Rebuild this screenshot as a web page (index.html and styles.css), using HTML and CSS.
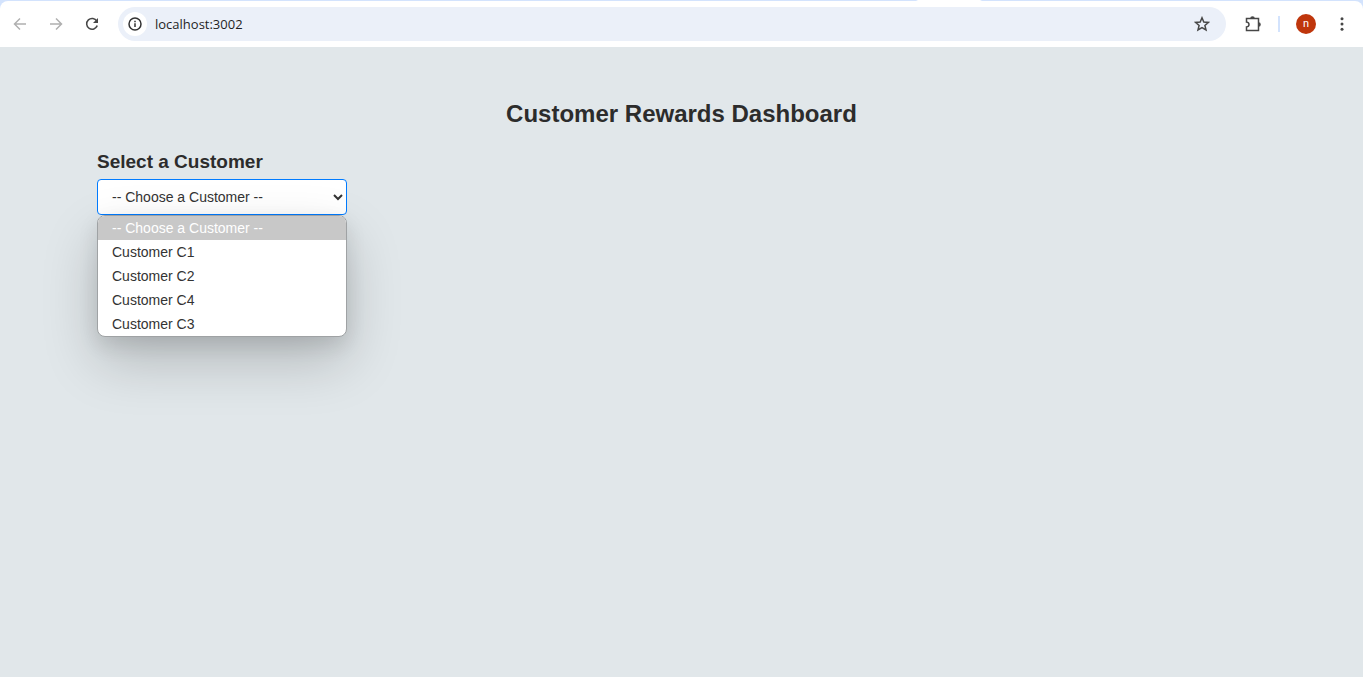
FILE: index.html
```
<!DOCTYPE html>
<html lang="en">
<head>
<meta charset="utf-8">
<title>Customer Rewards Dashboard</title>
<link rel="stylesheet" href="styles.css">
</head>
<body>
<header class="browser">
  <div class="toolbar">
    <nav class="nav" aria-label="Browser navigation">
      <button class="icon-btn dim" aria-label="Back"><svg viewBox="0 0 16 16"><path d="M14 8H2.5M8 2.5 2.5 8 8 13.5"/></svg></button>
      <button class="icon-btn dim" aria-label="Forward"><svg viewBox="0 0 16 16"><path d="M2 8h11.5M8 2.5 13.5 8 8 13.5"/></svg></button>
      <button class="icon-btn" aria-label="Reload"><svg viewBox="0 0 16 16"><path d="M12.8 5.2A5.4 5.4 0 1 0 13.2 9.6"/><path class="solid" d="M14 2v5H9z"/></svg></button>
    </nav>
    <div class="address">
      <button class="info" aria-label="Site information"><svg viewBox="0 0 16 16"><circle cx="8" cy="8" r="6"/><path d="M8 7.2V11M8 4.8v1.4"/></svg></button>
      <input class="url" type="text" aria-label="Address" value="localhost:3002">
      <button class="icon-btn" aria-label="Bookmark"><svg viewBox="0 0 16 16"><path d="M8 1.8 9.8 6l4.6.4-3.5 3 1.1 4.5L8 11.5l-4 2.4 1.1-4.5-3.5-3L6.2 6z"/></svg></button>
    </div>
    <div class="actions">
      <button class="icon-btn" aria-label="Extensions"><svg class="puzzle" viewBox="0 0 18 18"><path d="M2.500 3.500H14.500V15.500H2.500V12Q5 11.600 5 9.500T2.500 7Z"/><path class="solid" d="M6.200 3.500a2.300 2.300 0 0 1 4.600 0zM14.500 7.200a2.300 2.300 0 0 1 0 4.600z"/></svg></button>
      <span class="divider"></span>
      <button class="avatar" aria-label="Profile">n</button>
      <button class="icon-btn" aria-label="Menu"><svg viewBox="0 0 16 16"><g class="solid"><circle cx="8" cy="2.700" r="1.500"/><circle cx="8" cy="8" r="1.500"/><circle cx="8" cy="13.300" r="1.500"/></g></svg></button>
    </div>
  </div>
</header>
<main class="dashboard">
  <h1 class="title">Customer Rewards Dashboard</h1>
  <label class="label" for="customer">Select a Customer</label>
  <div class="picker">
    <select class="select" id="customer">
      <option>-- Choose a Customer --</option>
      <option>Customer C1</option>
      <option>Customer C2</option>
      <option>Customer C4</option>
      <option>Customer C3</option>
    </select>
    <ul class="menu" role="listbox" aria-label="Customers">
      <li class="option selected" role="option" aria-selected="true">-- Choose a Customer --</li>
      <li class="option" role="option">Customer C1</li>
      <li class="option" role="option">Customer C2</li>
      <li class="option" role="option">Customer C4</li>
      <li class="option" role="option">Customer C3</li>
    </ul>
  </div>
</main>
</body>
</html>
```
FILE: styles.css
```
* { box-sizing: border-box; }

body {
  margin: 0;
  min-height: 100vh;
  background: #e1e7ea;
  color: #2c2c2c;
  font-family: Arial, "Liberation Sans", sans-serif;
}

button {
  border: 0;
  padding: 0;
  background: none;
  font: inherit;
}

.browser {
  padding-top: 1px;
  background: linear-gradient(to right, #d3e3fd 916px, #fff 918px, #fff 980px, #d3e3fd 982px);
}

.toolbar {
  display: flex;
  align-items: center;
  height: 46px;
  padding: 0 12px 0 11px;
  background: #fff;
  border-radius: 8px 8px 0 0;
}

.nav {
  display: flex;
  gap: 18px;
}

.icon-btn {
  display: grid;
  place-items: center;
  width: 18px;
  height: 18px;
  color: #474747;
}

.dim { color: #b0b0b0; }

svg {
  width: 16px;
  height: 16px;
  fill: none;
  stroke: currentColor;
  stroke-width: 1.5;
}

.puzzle {
  width: 18px;
  height: 18px;
}

.solid {
  fill: currentColor;
  stroke: none;
}

.address {
  display: flex;
  flex: 1;
  align-items: center;
  height: 34px;
  margin-left: 17px;
  padding: 0 15px 0 5px;
  border-radius: 17px;
  background: #ebf0f9;
}

.info {
  display: grid;
  place-items: center;
  width: 24px;
  height: 24px;
  border-radius: 50%;
  background: #fff;
  color: #333;
}

.url {
  flex: 1;
  min-width: 0;
  padding: 0 8px;
  border: 0;
  outline: 0;
  background: none;
  color: #1f1f1f;
  font: 13px "Segoe UI", "Open Sans", sans-serif;
}

.actions {
  display: flex;
  align-items: center;
  margin-left: 18px;
}

.divider {
  width: 2px;
  height: 16px;
  margin: 0 16px;
  background: #d3e3fd;
}

.avatar {
  width: 20px;
  height: 20px;
  margin-right: 17px;
  border-radius: 50%;
  background: #bf360c;
  color: #fff;
  font: 11px/20px Roboto, sans-serif;
}

.dashboard { padding: 53px 97px; }

.title {
  margin: 0 0 20px;
  font-size: 24px;
  line-height: 28px;
  text-align: center;
}

.label {
  display: block;
  margin-bottom: 3px;
  font-size: 19px;
  font-weight: bold;
  line-height: 28px;
}

.picker {
  position: relative;
  width: 250px;
}

.select {
  display: block;
  width: 100%;
  height: 36px;
  padding: 0 0 0 10px;
  border: 1px solid #007bff;
  border-radius: 4px;
  outline: 0;
  background: #fff;
  color: #333;
  font: 14px Arial, "Liberation Sans", sans-serif;
}

.menu {
  position: absolute;
  top: 100%;
  left: 0;
  width: 100%;
  margin: 0;
  padding: 0;
  overflow: hidden;
  border: 1px solid #9fa2a4;
  border-radius: 8px;
  background: #fff;
  box-shadow: 0 8px 20px rgba(0, 0, 0, 0.1), 0 24px 56px rgba(0, 0, 0, 0.2);
  color: #333;
  font-size: 14px;
  line-height: 24px;
  list-style: none;
}

.option { padding: 0 14px; }

.selected {
  background: #c8c8c8;
  color: #fff;
}
```
